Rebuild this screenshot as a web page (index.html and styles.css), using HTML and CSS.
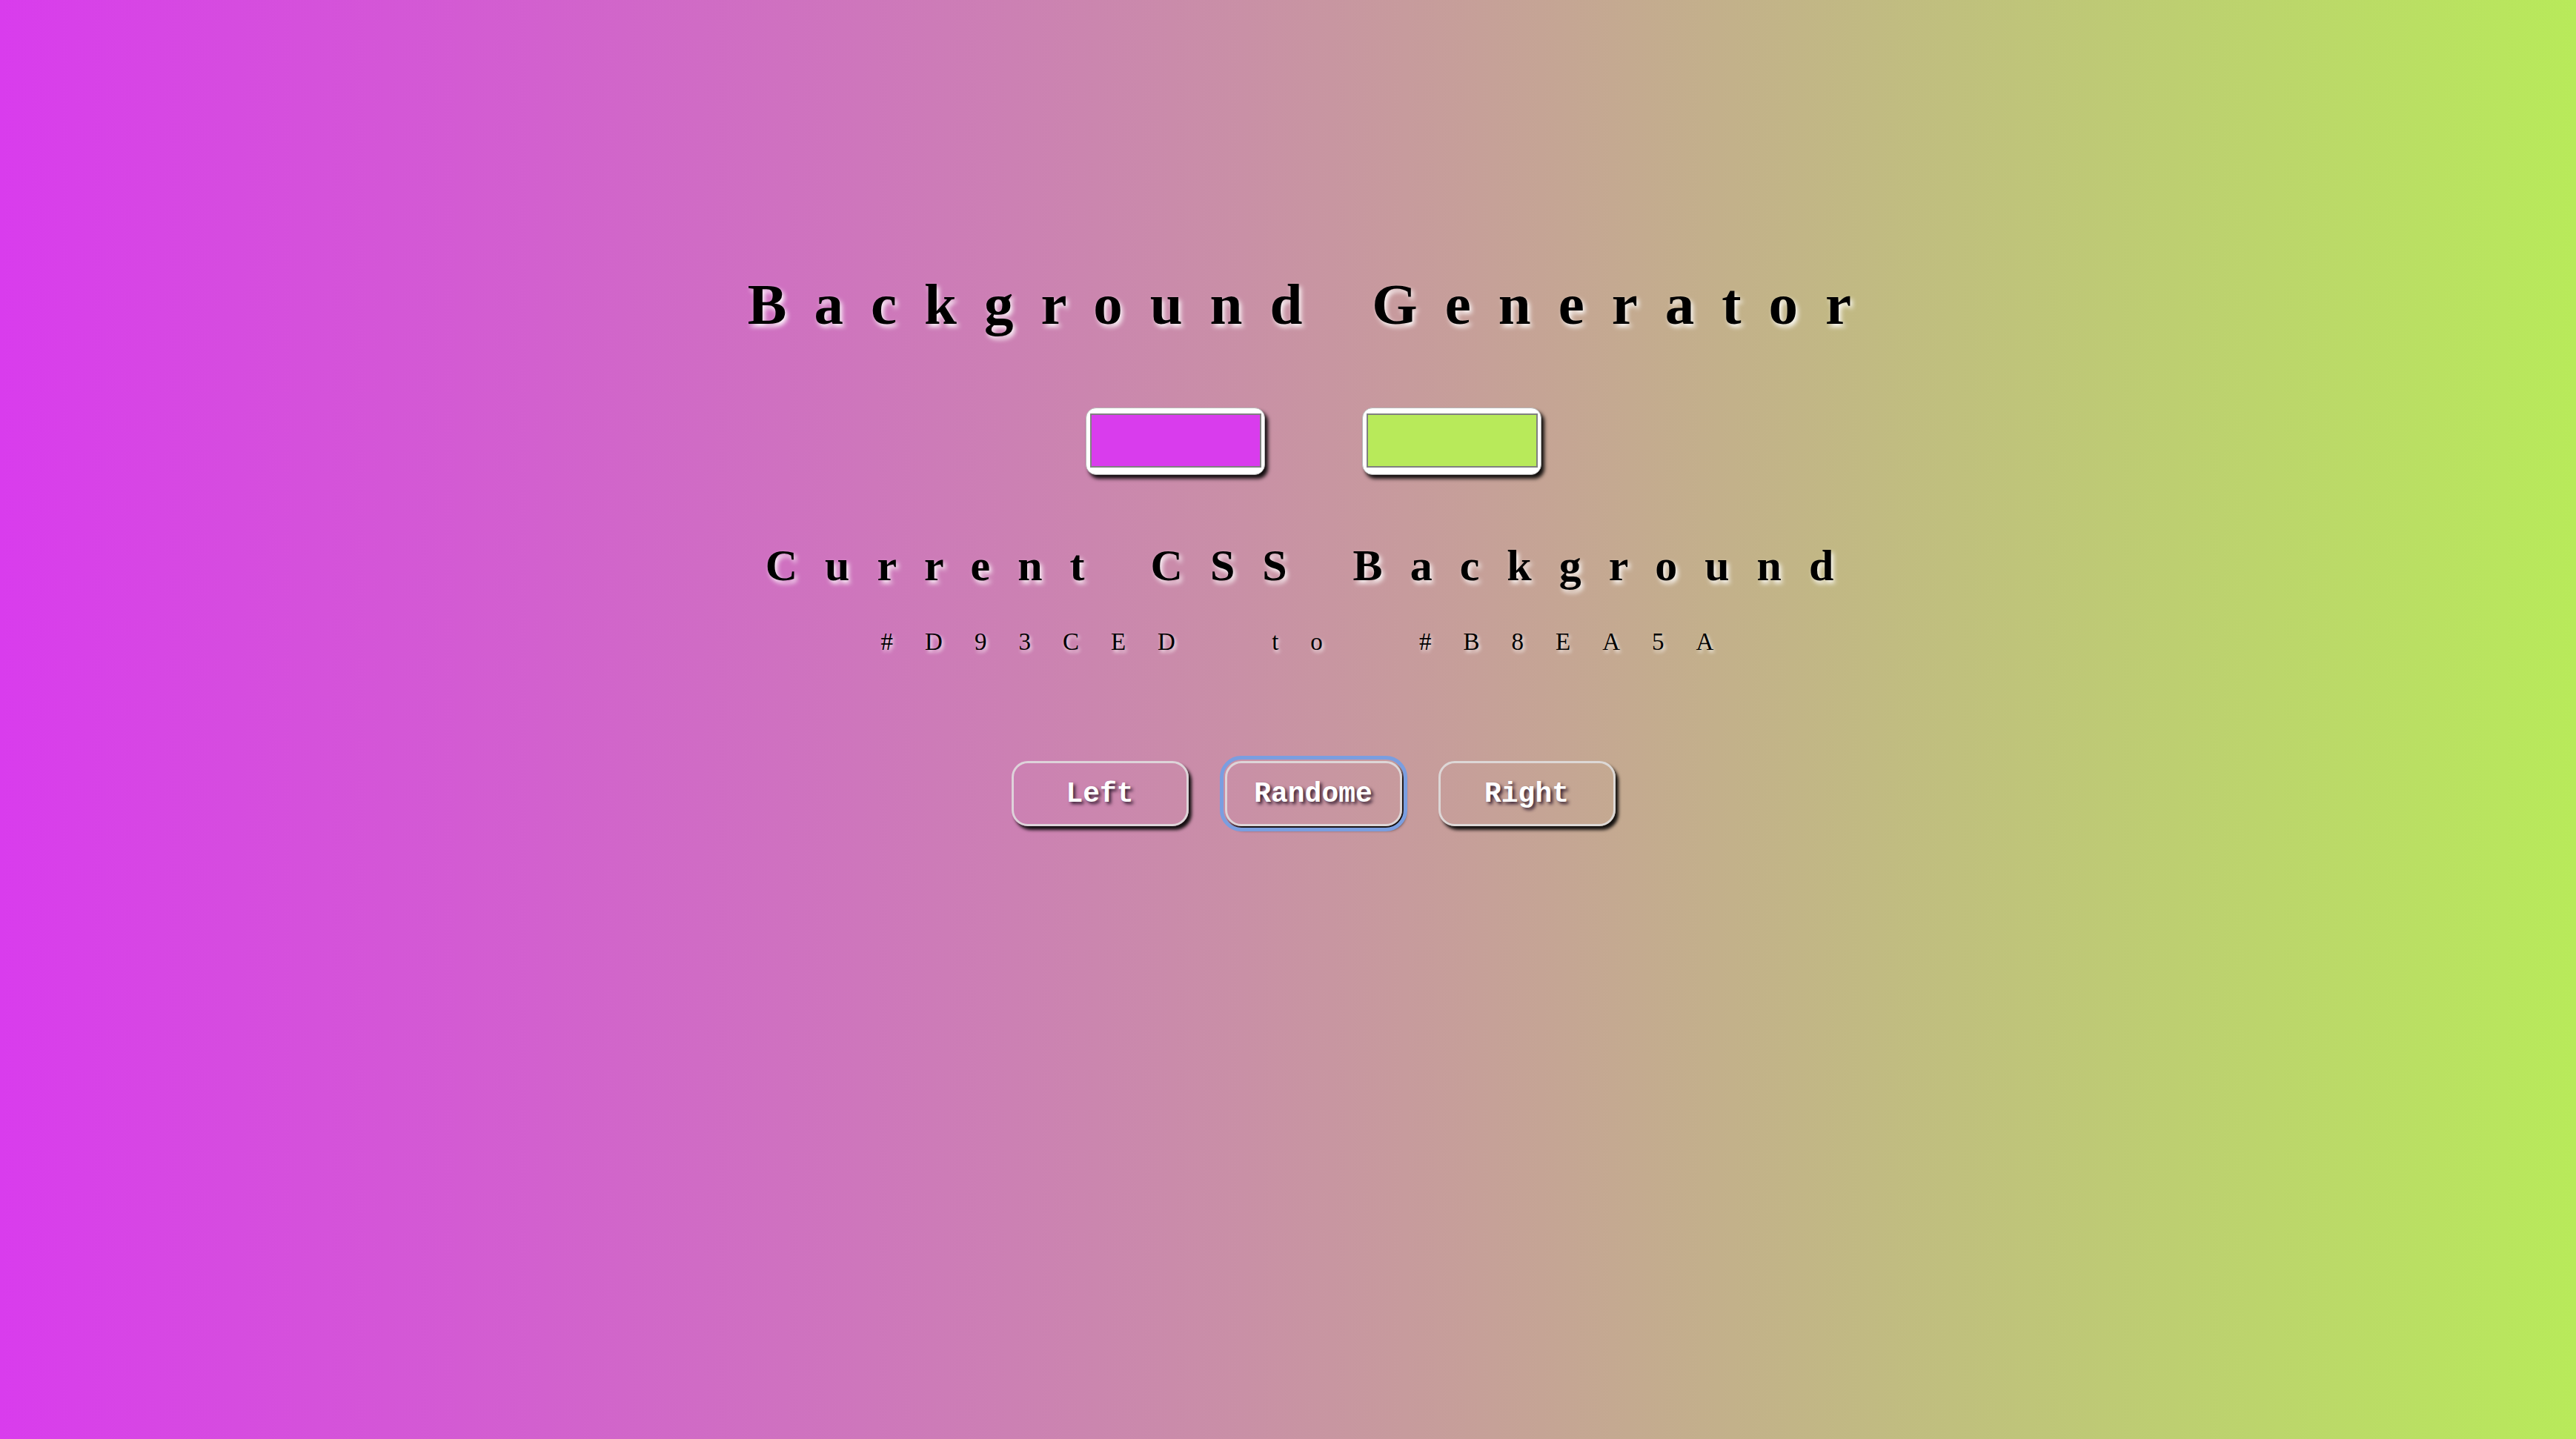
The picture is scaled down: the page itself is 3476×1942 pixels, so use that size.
FILE: index.html
```html
<!DOCTYPE html>
<html lang="en">
<head>
<meta charset="utf-8">
<title>Background Generator</title>
<link rel="stylesheet" href="styles.css">
</head>
<body>
<main class="page">
  <h1 class="title">Background Generator</h1>
  <div class="pickers">
    <div class="picker"><div class="swatch swatch-left"></div></div>
    <div class="picker"><div class="swatch swatch-right"></div></div>
  </div>
  <h3 class="subtitle">Current CSS Background</h3>
  <p class="code">#D93CED to #B8EA5A</p>
  <div class="buttons">
    <button class="btn">Left</button>
    <button class="btn btn-focus">Randome</button>
    <button class="btn">Right</button>
  </div>
</main>
</body>
</html>
```

FILE: styles.css
```css
html, body {
  margin: 0;
  padding: 0;
}

body {
  min-height: 100vh;
  background: linear-gradient(to right, #D93CED, #B8EA5A);
  font-family: "Liberation Serif", "Times New Roman", serif;
}

.page {
  display: flex;
  flex-direction: column;
  align-items: center;
  padding-left: 68px;
  padding-top: 371px;
}

.title {
  margin: 0;
  font-size: 79px;
  line-height: 79px;
  font-weight: bold;
  letter-spacing: 37px;
  color: #000;
  text-shadow: 3px 4px 6px rgba(255, 255, 255, 0.95);
}

.pickers {
  display: flex;
  gap: 131px;
  margin-top: 100px;
}

.picker {
  box-sizing: border-box;
  width: 242px;
  height: 91px;
  background: #fff;
  border: 1.5px solid #b8b8b8;
  border-radius: 14px;
  padding: 7px 4px 9px 5px;
  box-shadow: 4px 5px 5px rgba(0, 0, 0, 0.9);
}

.swatch {
  box-sizing: border-box;
  width: 100%;
  height: 100%;
  border: 2px solid #808080;
}

.swatch-left { background: #D93CED; }
.swatch-right { background: #B8EA5A; }

.subtitle {
  margin: 92px 0 0;
  font-size: 60px;
  line-height: 60px;
  font-weight: bold;
  letter-spacing: 37px;
  color: #000;
  text-shadow: 3px 4px 6px rgba(255, 255, 255, 0.95);
}

.code {
  margin: 57px 0 0;
  font-size: 33px;
  line-height: 33px;
  letter-spacing: 43px;
  word-spacing: 36px;
  color: #000;
  text-shadow: 2px 3px 5px rgba(255, 255, 255, 0.9);
}

.buttons {
  display: flex;
  gap: 49px;
  margin-top: 144px;
}

.btn {
  box-sizing: border-box;
  width: 239px;
  height: 88px;
  padding: 0;
  background: transparent;
  border: 3px solid rgba(225, 225, 225, 0.85);
  border-radius: 22px;
  box-shadow: 4px 5px 4px rgba(0, 0, 0, 0.9);
  font-family: "Courier New", "Nimbus Mono PS", "FreeMono", "Liberation Mono", monospace;
  font-weight: bold;
  font-size: 38px;
  color: #fff;
  text-shadow: 3px 3px 4px rgba(40, 20, 40, 0.9);
  cursor: pointer;
}

.btn-focus {
  outline: 5px solid #7a9ee0;
  outline-offset: 2px;
}
```
